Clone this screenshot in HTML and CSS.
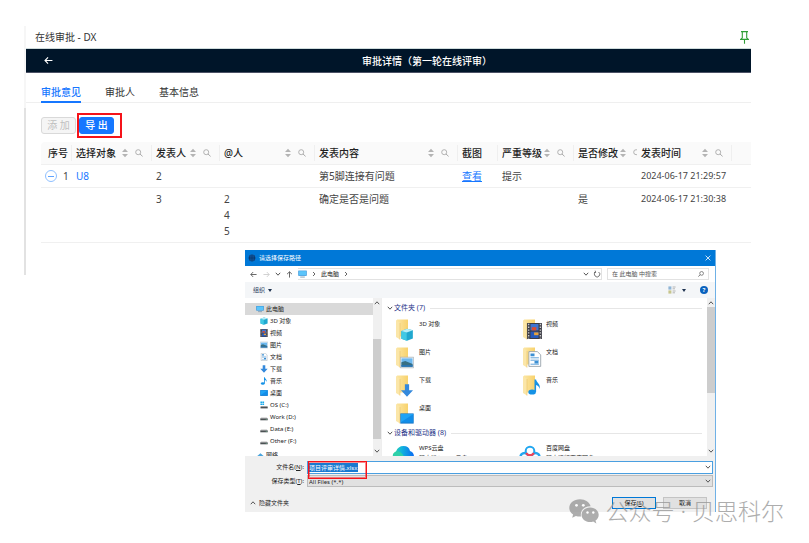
FILE: index.html
```html
<!DOCTYPE html>
<html lang="zh-CN">
<head>
<meta charset="utf-8">
<title>在线审批 - DX</title>
<link rel="stylesheet" href="styles.css">
</head>
<body>
<svg class="defs" aria-hidden="true">
  <defs>
    <linearGradient id="gold" x1="0" x2="1" y1="0" y2="0"><stop offset="0" stop-color="#fbe5a2"/><stop offset="1" stop-color="#f8d26c"/></linearGradient>
    <linearGradient id="wps" x1="0" x2="1" y1="0" y2="0"><stop offset="0" stop-color="#2fdc9c"/><stop offset=".4" stop-color="#12b5dc"/><stop offset="1" stop-color="#0a6af2"/></linearGradient>
    <symbol id="sort" viewBox="0 0 6 10"><path d="M3 0.8 6 4H0zM3 9.2 0 6h6z" fill="#b4b4b4"/></symbol>
    <symbol id="search" viewBox="0 0 8 8"><circle cx="3.2" cy="3.2" r="2.5" fill="none" stroke="currentColor" stroke-width=".9"/><path d="M5 5 7.6 7.4" stroke="currentColor" stroke-width="1"/></symbol>
    <symbol id="down" viewBox="0 0 6 6"><path d="M.8 1.8 3 4.2 5.2 1.8" fill="none" stroke="currentColor" stroke-width="1"/></symbol>
    <symbol id="up" viewBox="0 0 6 6"><path d="M.8 4.2 3 1.8 5.2 4.2" fill="none" stroke="currentColor" stroke-width="1"/></symbol>
    <symbol id="right" viewBox="0 0 6 6"><path d="M2 1 4 3 2 5" fill="none" stroke="currentColor" stroke-width=".9"/></symbol>
    <symbol id="back" viewBox="0 0 8 8"><path d="M7.5 4H1M3.6 1.2.9 4l2.7 2.8" fill="none" stroke="currentColor" stroke-width="1"/></symbol>
    <symbol id="pc" viewBox="0 0 9 8"><path d="M.3.6h8.4v5.2H.3z" fill="#2b8fd8"/><path d="M.9 1.1h7.2v4.1H.9z" fill="#5bc4fa"/><path d="M2.2 6.6h4.6v.9H2.2z" fill="#7c9ab0"/></symbol>
    <symbol id="cube" viewBox="0 0 8 8"><path d="M.5 1.8 4 .4l3.6 1v5L4 7.8.5 6.6z" fill="#20a8cf"/><path d="m.5 1.8 3.3 1v5L.5 6.6z" fill="#3fc9e4"/><path d="M.5 1.8 4 .4l3.6 1-3.8 1.4z" fill="#b6eff8"/></symbol>
    <symbol id="film" viewBox="0 0 8 8"><path d="M.3 0h7.4v8H.3z" fill="#3c3c44"/><path d="M2 .5h4v3.2H2z" fill="#3f74d0"/><path d="M2 4.3h4v3.2H2z" fill="#265bbb"/><path d="M2.6 2.1h2.3v1.6H2.6z" fill="#dc4a2f"/><path d="M3.8 4.7H6v1.4H3.8z" fill="#e8a33a"/><path d="M1.1.4v7.4M6.9.4v7.4" stroke="#ddd" stroke-width=".6" stroke-dasharray=".7 .7"/></symbol>
    <symbol id="photo" viewBox="0 0 8 7"><path d="M.2.5h7.6v6H.2z" fill="#fff" stroke="#9aa6b0" stroke-width=".4"/><path d="M.8 1.1h6.4v4.8H.8z" fill="#6db8ef"/><path d="M.8 3.4 3 2.7l4.2 1.7v1.5H.8z" fill="#386f83"/><path d="M.8 5h6.4v.9H.8z" fill="#2774b8"/></symbol>
    <symbol id="doc" viewBox="0 0 8 8"><path d="M1.2.3h4.2l1.7 1.6v5.8H1.2z" fill="#fff" stroke="#8c98a2" stroke-width=".4"/><path d="M2 3.4h4.2M2 4.6h4.2M2 6.6h4.2" stroke="#62a3d8" stroke-width=".5"/><path d="M2 1.3h2v1.3H2zM4 5h2v1.2H4z" fill="#3b8fd3"/></symbol>
    <symbol id="arrow" viewBox="0 0 8 8"><path d="M2.7.2h2.6v3.6h2.4L4 7.8.3 3.8h2.4z" fill="#3489dc"/></symbol>
    <symbol id="note" viewBox="0 0 8 8"><ellipse cx="2.8" cy="6.5" rx="1.9" ry="1.3" fill="#1592e6"/><path d="M4 .2h.8c.1 1.6 2.4 2 1.8 4.8-.3-1.3-1-1.8-1.8-2v3.5H4z" fill="#1592e6"/></symbol>
    <symbol id="desk" viewBox="0 0 8 7"><path d="M.2.6h7.6v5.8H.2z" fill="#1272c5"/><path d="M.5.9h7v4.8h-7z" fill="#20a4f6"/><path d="M.5 5.7 7.5 1v4.7z" fill="#128de8"/></symbol>
    <symbol id="disk" viewBox="0 0 8 8"><path d="m1.2 4.3-.9 1.3h7.4l-.9-1.3z" fill="#d2d2d2"/><path d="M.3 5.4h7.4v1.9H.3z" fill="#4c5154"/><path d="M5.8 6h1v.6h-1z" fill="#7be0a5"/></symbol>
    <symbol id="osdisk" viewBox="0 0 8 8"><path d="M.4.4h1.7v1.7H.4zM2.4.4h1.7v1.7H2.4zM.4 2.4h1.7V4H.4zM2.4 2.4h1.7V4H2.4z" fill="#18a9ea"/><path d="M1 5h6l.7 1H.5z" fill="#d2d2d2"/><path d="M.5 5.6h7.2v1.8H.5z" fill="#4c5154"/></symbol>
    <symbol id="net" viewBox="0 0 9 8"><path d="M1 5.5 5 2l4 3.5L5 8z" fill="#4aa4dc"/><path d="M0 5.5h3v2H0z" fill="#276e9f"/></symbol>
    <symbol id="folder" viewBox="0 0 20 21"><path d="M2 .5h11v17H2z" fill="url(#gold)"/><path d="M1 .8 5 4v16.6L1 18z" fill="#fbe6a8"/><path d="M5 4v16.6" stroke="#e7bb58" stroke-width=".5"/></symbol>
  </defs>
</svg>

<main class="app">
  <div class="titlebar">
    <h1>在线审批 - DX</h1>
    <svg class="pin" viewBox="0 0 9 13" aria-hidden="true"><path d="M1 .6h7M2.3.6v6.2L.6 8.4h7.8L6.7 6.8V.6M4.5 8.4v4.4" fill="none" stroke="#2f9e36" stroke-width="1.1"/></svg>
  </div>
  <header class="banner">
    <button class="back" aria-label="返回"><svg><use href="#back"/></svg></button>
    <h2>审批详情（第一轮在线评审）</h2>
  </header>
  <nav class="tabs">
    <a class="active" href="#opinions">审批意见</a>
    <a href="#people">审批人</a>
    <a href="#info">基本信息</a>
  </nav>
  <div class="actions">
    <button class="btn" disabled>添 加</button>
    <span class="marked"><button class="btn primary">导 出</button></span>
  </div>
  <table class="grid" id="opinions">
    <colgroup><col class="c-no"><col class="c-target"><col class="c-author"><col class="c-at"><col class="c-content"><col class="c-shot"><col class="c-level"><col class="c-changed"><col class="c-time"><col></colgroup>
    <thead>
      <tr>
        <th class="no"><div>序号</div></th>
        <th><div>选择对象<svg class="sort"><use href="#sort"/></svg><svg class="find"><use href="#search"/></svg></div></th>
        <th><div>发表人<svg class="sort"><use href="#sort"/></svg><svg class="find"><use href="#search"/></svg></div></th>
        <th><div>@人<svg class="sort"><use href="#sort"/></svg><svg class="find"><use href="#search"/></svg></div></th>
        <th><div>发表内容<svg class="sort"><use href="#sort"/></svg><svg class="find"><use href="#search"/></svg></div></th>
        <th><div>截图</div></th>
        <th><div>严重等级<svg class="sort"><use href="#sort"/></svg><svg class="find"><use href="#search"/></svg></div></th>
        <th class="tight"><div>是否修改<svg class="sort"><use href="#sort"/></svg><svg class="find"><use href="#search"/></svg></div></th>
        <th><div>发表时间<svg class="sort"><use href="#sort"/></svg><svg class="find"><use href="#search"/></svg></div></th>
        <th></th>
      </tr>
    </thead>
    <tbody>
      <tr>
        <td><div class="expand"><button aria-label="收起"></button>1</div></td>
        <td><a href="#u8">U8</a></td><td>2</td><td></td><td>第5脚连接有问题</td>
        <td><a class="view" href="#shot">查看</a></td><td>提示</td><td></td><td class="time">2024-06-17 21:29:57</td><td></td>
      </tr>
      <tr>
        <td></td><td></td><td>3</td><td>2<br>4<br>5</td><td>确定是否是问题</td><td></td><td></td><td>是</td><td class="time">2024-06-17 21:30:38</td><td></td>
      </tr>
    </tbody>
  </table>
</main>

<section class="dialog" role="dialog" aria-labelledby="dlg-title">
  <header class="dlg-title">
    <svg class="globe" viewBox="0 0 8 8"><circle cx="4" cy="4" r="3.4" fill="#10559a"/><path d="M4 .6v6.8M.6 4h6.8M2 1.3q-1 2.7 0 5.4M6 1.3q1 2.7 0 5.4" fill="none" stroke="#062f62" stroke-width=".6"/></svg>
    <h2 id="dlg-title">请选择保存路径</h2>
    <button class="close" aria-label="关闭"><svg viewBox="0 0 6 6"><path d="m.6.6 4.8 4.8m0-4.8L.6 5.4" stroke="#fff" stroke-width=".8"/></svg></button>
  </header>
  <div class="address">
    <svg class="s8 go"><use href="#back"/></svg>
    <svg class="s8 go forward"><use href="#back"/></svg>
    <svg class="s6"><use href="#down"/></svg>
    <svg class="s8 go upward"><use href="#back"/></svg>
    <div class="path">
      <svg class="s9"><use href="#pc"/></svg><svg class="s6"><use href="#right"/></svg><span>此电脑</span><svg class="s6"><use href="#right"/></svg>
      <svg class="s6 end"><use href="#down"/></svg>
      <svg class="s8 refresh" viewBox="0 0 8 8"><path d="M5.6 2A2.7 2.7 0 1 1 2.6 2M2.2.7l.4 1.6L1 2.6" fill="none" stroke="#555" stroke-width=".8"/></svg>
    </div>
    <div class="searchbox"><input type="text" aria-label="搜索" placeholder="在 此电脑 中搜索"><svg class="s6"><use href="#search"/></svg></div>
  </div>
  <div class="tools">
    <button class="organize">组织<i class="caret"></i></button>
    <svg class="viewmode" viewBox="0 0 8 8"><path d="M.4.4h3v3.2h-3z" fill="#8fb5d6"/><path d="M.4 4.4h3v3.2h-3z" fill="#c6c58c"/><path d="M4.6 1h3M4.6 2.8h2.4M4.6 5h3M4.6 6.8h2.4" stroke="#999" stroke-width=".7"/></svg>
    <i class="caret"></i>
    <button class="help" aria-label="帮助">?</button>
  </div>
  <div class="body">
    <ul class="tree">
      <li class="root"><svg><use href="#pc"/></svg>此电脑</li>
      <li><svg><use href="#cube"/></svg>3D 对象</li>
      <li><svg><use href="#film"/></svg>视频</li>
      <li><svg><use href="#photo"/></svg>图片</li>
      <li><svg><use href="#doc"/></svg>文档</li>
      <li><svg><use href="#arrow"/></svg>下载</li>
      <li><svg><use href="#note"/></svg>音乐</li>
      <li><svg><use href="#desk"/></svg>桌面</li>
      <li><svg><use href="#osdisk"/></svg>OS (C:)</li>
      <li><svg><use href="#disk"/></svg>Work (D:)</li>
      <li><svg><use href="#disk"/></svg>Data (E:)</li>
      <li><svg><use href="#disk"/></svg>Other (F:)</li>
      <li class="network"><svg><use href="#net"/></svg>网络</li>
    </ul>
    <div class="scroll left"><svg class="s6"><use href="#up"/></svg><i></i><svg class="s6"><use href="#down"/></svg></div>
    <div class="files">
      <h3><svg class="s6"><use href="#down"/></svg>文件夹 (7)</h3>
      <ul class="tiles">
        <li><span class="ico"><svg><use href="#folder"/></svg><svg class="badge"><use href="#cube"/></svg></span>3D 对象</li>
        <li><span class="ico"><svg><use href="#folder"/></svg><svg class="badge big"><use href="#film"/></svg></span>视频</li>
        <li><span class="ico"><svg><use href="#folder"/></svg><svg class="badge"><use href="#photo"/></svg></span>图片</li>
        <li><span class="ico"><svg><use href="#folder"/></svg><svg class="badge big"><use href="#doc"/></svg></span>文档</li>
        <li><span class="ico"><svg><use href="#folder"/></svg><svg class="badge"><use href="#arrow"/></svg></span>下载</li>
        <li><span class="ico"><svg><use href="#folder"/></svg><svg class="badge big"><use href="#note"/></svg></span>音乐</li>
        <li><span class="ico"><svg><use href="#folder"/></svg><svg class="badge"><use href="#desk"/></svg></span>桌面</li>
      </ul>
      <h3><svg class="s6"><use href="#down"/></svg>设备和驱动器 (8)</h3>
      <ul class="tiles drives">
        <li><span class="ico"><svg class="logo" viewBox="0 0 22 16"><path d="M5 16a5 5 0 0 1-1-9.500Q6 1 11.500 1T18 6q4 1 4 6t-4 4z" fill="url(#wps)"/><path d="M4 6.500Q10 5 14 16H3Q-2 10 4 6.500z" fill="#2fd0a9"/></svg></span><span>WPS云盘<br>双击进入WPS云盘</span></li>
        <li><span class="ico"><svg class="logo" viewBox="0 0 22 16"><circle cx="5.500" cy="12" r="4" fill="none" stroke="#22a7f0" stroke-width="2.500"/><circle cx="16.500" cy="12" r="4" fill="none" stroke="#22a7f0" stroke-width="2.500"/><circle cx="11" cy="6" r="4.300" fill="#fff" stroke="#22a7f0" stroke-width="2"/><path d="M7.200 8a4.300 4.300 0 0 0 7.600 0" fill="none" stroke="#ef4356" stroke-width="2.200"/></svg></span><span>百度网盘<br>双击运行百度网盘</span></li>
      </ul>
    </div>
    <div class="scroll main"><svg class="s6"><use href="#up"/></svg><i></i><svg class="s6"><use href="#down"/></svg></div>
  </div>
  <form class="save">
    <label for="fname">文件名(<u>N</u>):</label>
    <div class="field name"><input id="fname" type="text" value="项目评审详情.xlsx"><svg class="s6"><use href="#down"/></svg></div>
    <label for="ftype">保存类型(<u>T</u>):</label>
    <div class="field"><select id="ftype"><option>All Files (*.*)</option></select><svg class="s6"><use href="#down"/></svg></div>
  </form>
  <footer class="dlg-foot">
    <button class="hide"><svg class="s6"><use href="#up"/></svg>隐藏文件夹</button>
    <button class="push default">保存(<u>S</u>)</button>
    <button class="push">取消</button>
  </footer>
</section>

<div class="watermark">
  <svg viewBox="0 0 30 25" aria-hidden="true"><path d="M11 .3C4.800.3.300 4.100.300 9c0 2.800 1.500 5 3.800 6.500L3.200 18.800l3.700-1.900q1.800.6 4.100.6l1 0C10.800 11.500 15.500 7 21.600 7.200 20.600 3.200 16.300.3 11 .3z" fill="currentColor"/><path d="M21.200 8.500c-5 0-8.700 3.300-8.700 7.300s3.700 7.300 8.700 7.300q1.500 0 3-.5l3.200 1.900-.9-2.900c2-1.400 3.200-3.400 3.200-5.800 0-4-3.700-7.300-8.500-7.300z" fill="currentColor"/><g fill="#fff"><circle cx="7.500" cy="6.300" r="1.400"/><circle cx="14.300" cy="6.300" r="1.400"/><circle cx="18.500" cy="13.500" r="1.200"/><circle cx="24.300" cy="13.500" r="1.200"/></g></svg>
  <span>公众号 · 贝思科尔</span>
</div>
</body>
</html>
```
FILE: styles.css
```css
* { box-sizing: border-box; }
body {
  margin: 0;
  background: #fff;
  color: #444;
  font: 10px/16px "Noto Sans", "Noto Sans CJK SC", sans-serif;
}
h1, h2, h3, ul { margin: 0; padding: 0; font: inherit; list-style: none; }
button, input, select { font: inherit; color: inherit; margin: 0; padding: 0; border: 0; background: none; }
a { color: #1677ff; text-decoration: none; }
svg { display: block; flex: none; }
.defs { position: absolute; width: 0; height: 0; }

/* approval page */
.app {
  margin: 26px 58px 0 24px;
  padding-bottom: 32px;
  border-style: solid;
  border-width: 0 0 0 2px;
  border-image: linear-gradient(#f6f6f6 33%, #e2e2e2 33%) 1;
}
.titlebar {
  display: flex;
  justify-content: space-between;
  align-items: center;
  height: 23px;
  padding: 0 2px 0 9px;
  border-bottom: 1px solid #cfdcdc;
  color: #333;
}
.pin { width: 9px; height: 13px; }
.banner {
  display: flex;
  align-items: center;
  height: 24px;
  padding-left: 18px;
  background: #001529;
  border-bottom: 1px solid #4c5266;
  color: #fff;
}
.banner h2 { flex: 1; padding-left: 50px; text-align: center; font-weight: 500; }
.back svg { width: 9px; height: 9px; }
.tabs {
  display: flex;
  gap: 24px;
  height: 30px;
  padding: 4px 0 0 15px;
  border-bottom: 1px solid #efefef;
}
.tabs a { height: 26px; line-height: 30px; color: #333; }
.tabs .active { color: #1677ff; border-bottom: 2px solid #1677ff; font-weight: 500; }
.actions { display: flex; gap: 3px; padding: 14px 0 8px 15px; }
.btn {
  display: block;
  width: 35px;
  height: 17px;
  line-height: 15px;
  border: 1px solid #d9d9d9;
  border-radius: 3px;
  background: #f5f5f5;
  color: #bfbfbf;
}
.btn.primary { background: #1677ff; border-color: #1677ff; color: #fff; font-weight: 500; }
.marked { position: relative; }
.marked::after {
  content: "";
  position: absolute;
  inset: -4px -8px -4px -2px;
  border: 2px solid #f5131a;
  pointer-events: none;
}

.grid { width: calc(100% - 15px); margin-left: 15px; border-collapse: separate; border-spacing: 0; table-layout: fixed; }
.c-no { width: 31px; }
.c-target { width: 80px; }
.c-author { width: 68px; }
.c-at { width: 95px; }
.c-content { width: 143px; }
.c-shot { width: 40px; }
.c-level { width: 76px; }
.c-changed { width: 63px; }
.c-time { width: 95px; }
.grid th { height: 23px; padding: 0; background: #fafafa; border-bottom: 1px solid #f0f0f0; color: #222; font-weight: 500; text-align: left; }
.grid th:first-child { border-top-left-radius: 4px; }
.grid th div { display: flex; align-items: center; height: 16px; padding: 0 8px 0 4px; border-right: 1px solid #efefef; overflow: hidden; white-space: nowrap; }
.grid th.no div { padding: 0 0 0 7px; }
.grid th.tight div { padding-right: 0; border-right: 0; }
.sort { width: 6px; height: 10px; margin-left: auto; }
.find { width: 8px; height: 8px; margin-left: 7px; color: #aaa; }
.tight .sort { margin-left: 2px; }
.grid td { padding: 3px 0 3px 4px; border-bottom: 1px solid #f0f0f0; vertical-align: top; white-space: nowrap; }
.grid .time { font-size: 9px; }
.grid .view { text-decoration: underline; }
.expand { display: flex; align-items: center; gap: 6px; }
.expand button { width: 12px; height: 12px; padding: 0 2px; border: 1px solid #8fc0ff; border-radius: 50%; }
.expand button::before { content: ""; display: block; height: 1px; background: #5fa3ff; }

/* save dialog */
.dialog {
  position: absolute;
  top: 250px;
  left: 245px;
  right: 93px;
  background: #f0f0f0;
  border-right: 1px solid #6fb1e6;
  color: #222;
  font-size: 6px;
  line-height: 12px;
}
.s6 { width: 6px; height: 6px; color: #555; }
.s8 { width: 8px; height: 8px; }
.s9 { width: 9px; height: 8px; }
.dlg-title { display: flex; align-items: center; gap: 3px; height: 16px; padding: 0 4px 0 3px; background: #0078d7; color: #fff; }
.globe { width: 8px; height: 8px; }
.close { margin-left: auto; }
.close svg { width: 6px; height: 6px; }
.address { display: flex; align-items: center; gap: 5px; height: 16px; padding: 0 6px 0 5px; background: #fff; }
.go { width: 7px; height: 7px; color: #555; }
.forward { margin-left: 1px; transform: rotate(180deg); color: #ccc; }
.upward { transform: rotate(90deg); }
.path { flex: 1; display: flex; align-items: center; gap: 4px; height: 12px; border: 1px solid #e2e2e2; border-left: 0; }
.path .end { margin-left: auto; }
.searchbox { display: flex; align-items: center; width: 102px; height: 12px; padding: 0 4px; border: 1px solid #e2e2e2; }
.searchbox input { flex: 1; min-width: 0; height: 10px; }
.searchbox input::placeholder { color: #555; opacity: 1; }
.searchbox svg { transform: scaleX(-1); }
.tools { display: flex; align-items: center; gap: 6px; height: 16px; padding: 0 7px 0 8px; background: #f4f6f8; }
.organize { display: flex; align-items: center; gap: 3px; margin-right: auto; color: #2b3d60; }
.caret { border: 2px solid transparent; border-top: 3px solid #1e3250; border-bottom: 0; }
.viewmode { width: 8px; height: 8px; }
.help { width: 8px; height: 8px; margin-left: 8px; border-radius: 50%; background: #0a62be; color: #fff; font-weight: 700; line-height: 8px; }
.body { display: flex; height: 158px; overflow: hidden; background: #fff; }
.tree { width: 128px; padding-top: 5px; background: #fff; }
.tree li { display: flex; align-items: center; gap: 2px; height: 12px; padding-left: 15px; }
.tree svg { width: 8px; height: 8px; }
.tree .root { padding-left: 11px; background: #d9d9d9; }
.tree .network { height: 16px; padding-left: 11px; }
.scroll { display: flex; flex-direction: column; align-items: center; width: 8px; padding: 2px 0; background: #f0f0f0; }
.scroll i { width: 100%; background: #cdcdcd; }
.scroll .s6:last-child { margin-top: auto; }
.scroll.left i { height: 100px; margin-top: 33px; }
.scroll.main i { height: 86px; margin-top: 1px; }
.files { flex: 1; padding: 4px 5px 0 5px; border-left: 1px solid #eee; }
.files h3 { display: flex; align-items: center; gap: 1px; color: #1e3287; font-size: 7px; }
.files h3::after { content: ""; flex: 1; height: 1px; margin-left: 4px; background: #e6e6e6; }
.tiles { display: grid; grid-template-columns: 127px 1fr; padding: 5px 0 0 8px; }
.tiles li { display: flex; align-items: flex-start; gap: 3px; height: 28px; line-height: 11px; }
.tiles + h3 { margin-top: -4px; }
.ico { position: relative; width: 21px; }
.ico svg { width: 20px; height: 21px; }
.ico .badge { position: absolute; left: 5px; top: 9px; width: 14px; height: 13px; }
.ico .badge.big { left: 4px; top: 4px; width: 17px; height: 16px; }
.tiles.drives { padding-top: 4px; }
.drives li { line-height: 10px; }
.ico .logo { width: 22px; height: 16px; margin: 2px 0 0 -3px; }
.save { display: grid; grid-template-columns: 59px 1fr; column-gap: 3px; row-gap: 1px; padding: 5px 2px 0 0; text-align: right; }
.field { position: relative; display: flex; height: 12px; border: 1px solid #bcbcbc; background: #e1e1e1; }
.field input, .field select { flex: 1; height: 10px; padding-left: 1px; appearance: none; }
.field svg { position: absolute; right: 1px; top: 2px; }
.field.name { height: 13px; border-color: #4a9fe0; background: #fff; }
.field.name input { height: 11px; color: #fff; background: linear-gradient(#1979d0, #1979d0) 1px 1px / 49px 9px no-repeat; }
.field.name::after { content: ""; position: absolute; left: 0; top: -1px; width: 57px; height: 16px; border: 1px solid #f5131a; outline: 1px solid #f5131a80; outline-offset: -2px; pointer-events: none; z-index: 1; }
.dlg-foot { display: flex; align-items: center; gap: 7px; padding: 10px 8px 3px 5px; }
.hide { display: flex; align-items: center; gap: 3px; margin-right: auto; }
.push { width: 44px; height: 12px; line-height: 10px; border: 1px solid #c4c4c4; background: #e1e1e1; }
.push.default { border: 1px solid #0078d7; }

.watermark {
  position: absolute;
  top: 499px;
  right: 25px;
  display: flex;
  align-items: center;
  gap: 6px;
  color: #999;
  opacity: .8;
  font-size: 23px;
  font-weight: 300;
  line-height: 25px;
}
.watermark svg { width: 30px; height: 25px; }
```
